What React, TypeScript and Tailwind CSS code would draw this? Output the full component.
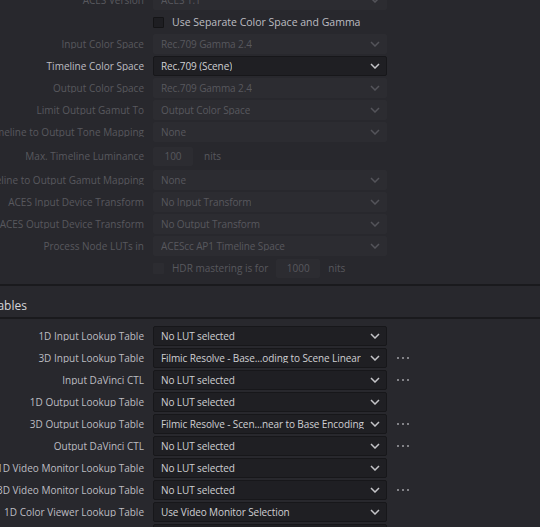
import { FC, ReactNode } from "react";

const Chevron: FC<{ dim?: boolean }> = ({ dim }) => (
  <svg width="10" height="6" viewBox="0 0 10 6" className={dim ? "text-[#54545a]" : "text-[#c4c4c8]"}>
    <path d="M1 1 L5 5 L9 1" fill="none" stroke="currentColor" strokeWidth="1.5" />
  </svg>
);

const Dots: FC = () => (
  <div className="ml-[10px] flex gap-[3px]">
    <span className="h-[2px] w-[2px] rounded-full bg-[#a0a0a6]" />
    <span className="h-[2px] w-[2px] rounded-full bg-[#a0a0a6]" />
    <span className="h-[2px] w-[2px] rounded-full bg-[#a0a0a6]" />
  </div>
);

const Select: FC<{ value: string; dim?: boolean }> = ({ value, dim }) => (
  <div
    className={
      dim
        ? "flex h-[20px] w-[234px] items-center justify-between rounded-[2px] bg-[#2c2c31] pl-[8px] pr-[7px] text-[#58585e]"
        : "flex h-[20px] w-[234px] items-center justify-between rounded-[2px] border border-[#17171a] bg-[#1f1f23] pl-[7px] pr-[6px] text-[#cfcfd3]"
    }
  >
    <span className="truncate tracking-[-0.1px]">{value}</span>
    <Chevron dim={dim} />
  </div>
);

const Row: FC<{ label: string; dim?: boolean; h?: string; children: ReactNode }> = ({ label, dim, h, children }) => (
  <div className={`flex items-center ${h ?? "h-[22px]"}`}>
    <div className="flex w-[145px] shrink-0 justify-end overflow-hidden pr-[1px]">
      <span className={`whitespace-nowrap ${dim ? "text-[#58585e]" : "text-[#bdbdc2]"}`}>{label}</span>
    </div>
    <div className="ml-[8px] flex items-center">{children}</div>
  </div>
);

const Box: FC<{ value: string; w: string }> = ({ value, w }) => (
  <div className={`flex h-[19px] ${w} items-center justify-center rounded-[2px] bg-[#2c2c31] text-[#58585e]`}>{value}</div>
);

const Check: FC<{ dim?: boolean }> = ({ dim }) => (
  <div
    className={
      dim
        ? "h-[11px] w-[11px] rounded-[1px] bg-[#2c2c31]"
        : "h-[11px] w-[11px] rounded-[1px] border border-[#141416] bg-[#1e1e22]"
    }
  />
);

const colorRows: { label: string; value: string; dim: boolean }[] = [
  { label: "Input Color Space", value: "Rec.709 Gamma 2.4", dim: true },
  { label: "Timeline Color Space", value: "Rec.709 (Scene)", dim: false },
  { label: "Output Color Space", value: "Rec.709 Gamma 2.4", dim: true },
  { label: "Limit Output Gamut To", value: "Output Color Space", dim: true },
  { label: "Timeline to Output Tone Mapping", value: "None", dim: true },
];

const acesRows = [
  { label: "Timeline to Output Gamut Mapping", value: "None" },
  { label: "ACES Input Device Transform", value: "No Input Transform" },
  { label: "ACES Output Device Transform", value: "No Output Transform" },
  { label: "Process Node LUTs in", value: "ACEScc AP1 Timeline Space" },
];

const lutRows = [
  { label: "1D Input Lookup Table", value: "No LUT selected", dots: false },
  { label: "3D Input Lookup Table", value: "Filmic Resolve - Base...oding to Scene Linear", dots: true },
  { label: "Input DaVinci CTL", value: "No LUT selected", dots: true },
  { label: "1D Output Lookup Table", value: "No LUT selected", dots: false },
  { label: "3D Output Lookup Table", value: "Filmic Resolve - Scen...near to Base Encoding", dots: true },
  { label: "Output DaVinci CTL", value: "No LUT selected", dots: true },
  { label: "1D Video Monitor Lookup Table", value: "No LUT selected", dots: false },
  { label: "3D Video Monitor Lookup Table", value: "No LUT selected", dots: true },
  { label: "1D Color Viewer Lookup Table", value: "Use Video Monitor Selection", dots: false },
  { label: "3D Color Viewer Lookup Table", value: "Use Video Monitor Selection", dots: false },
];

export default function App() {
  return (
    <div className="h-[527px] w-[540px] overflow-hidden bg-[#28282d] font-['Open_Sans',sans-serif] text-[10px] leading-none">
      <div className="-mt-[11px]">
        <Row label="ACES Version" dim>
          <Select value="ACES 1.1" dim />
        </Row>
        <div className="flex h-[22px] items-center pl-[153px]">
          <Check />
          <span className="ml-[8px] text-[10.5px] text-[#bdbdc2]">Use Separate Color Space and Gamma</span>
        </div>
        {colorRows.map((r) => (
          <Row key={r.label} label={r.label} dim={r.dim}>
            <Select value={r.value} dim={r.dim} />
          </Row>
        ))}
        <Row label="Max. Timeline Luminance" dim h="h-[26px]">
          <Box value="100" w="w-[40px]" />
          <span className="ml-[11px] text-[#58585e]">nits</span>
        </Row>
        {acesRows.map((r) => (
          <Row key={r.label} label={r.label} dim>
            <Select value={r.value} dim />
          </Row>
        ))}
        <div className="flex h-[22px] items-center pl-[153px]">
          <Check dim />
          <span className="ml-[8px] text-[#58585e]">HDR mastering is for</span>
          <div className="ml-[8px]">
            <Box value="1000" w="w-[44px]" />
          </div>
          <span className="ml-[8px] text-[#58585e]">nits</span>
        </div>
      </div>

      <div className="mt-[5px] h-[2px] bg-[#1a1a1d]" />
      <div className="flex h-[31px] items-center overflow-hidden pt-[8px]">
        <span className="-ml-[54px] whitespace-nowrap text-[12px] text-[#d6d6da]">Lookup Tables</span>
      </div>
      <div className="h-[2px] bg-[#1a1a1d]" />

      <div className="pt-[6px]">
        {lutRows.map((r) => (
          <Row key={r.label} label={r.label}>
            <Select value={r.value} />
            {r.dots && <Dots />}
          </Row>
        ))}
      </div>
    </div>
  );
}
